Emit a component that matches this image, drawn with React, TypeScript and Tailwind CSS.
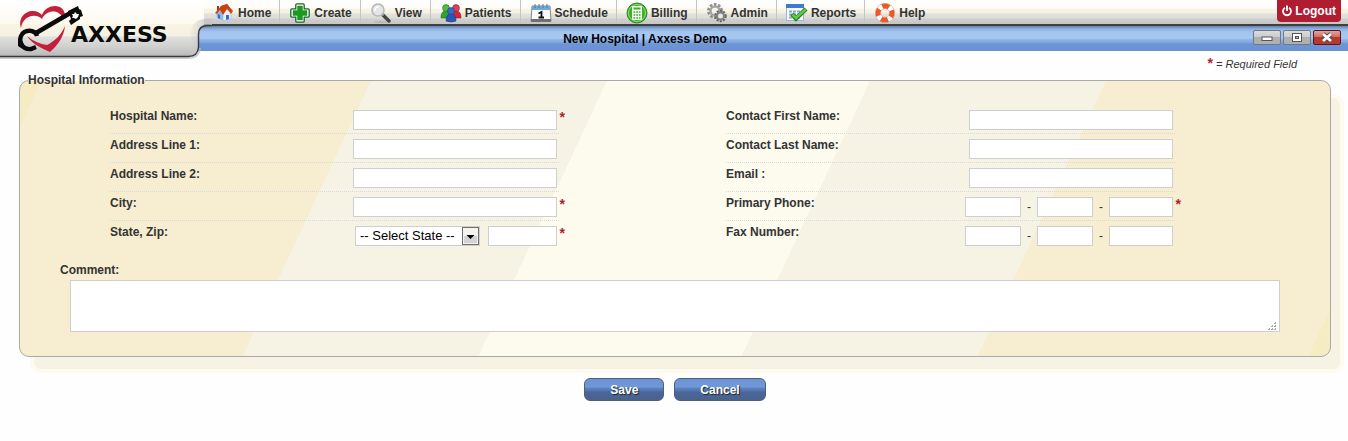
import type { ReactNode } from 'react';

const HomeIcon = () => (
  <svg width="20" height="20" viewBox="0 0 20 20">
    <path d="M2 9 L7 6 L10 11 L10 18 L3 15 Z" fill="#8fbbe9" />
    <path d="M9 18 L9 10 L13 6 L17 10 L17 16 Z" fill="#e9f0fa" stroke="#9fb8dc" strokeWidth=".6" />
    <path d="M4 11 L6 12 V16 L4 15 Z M12 12 H15 V16 L12 17 Z" fill="#2d6fc4" />
    <path d="M1 10 L7 3 L13 1 L19 8 L17 11 L13 6 L9 12 L6 7 L3 11 Z" fill="#cf4a18" />
    <path d="M7 3 L13 1 L18 8 L13 5 L9 11 L6 6 Z" fill="#c7420f" />
    <path d="M3 3 H5 V6 L3 8 Z" fill="#a33512" />
  </svg>
);

const CreateIcon = () => (
  <svg width="20" height="20" viewBox="0 0 20 20">
    <path
      d="M7 .8 H13 Q14.200 .8 14.200 2 V5.800 H18 Q19.200 5.800 19.200 7 V13 Q19.200 14.200 18 14.200 H14.200 V18 Q14.200 19.200 13 19.200 H7 Q5.800 19.200 5.800 18 V14.200 H2 Q.8 14.200 .8 13 V7 Q.8 5.800 2 5.800 H5.800 V2 Q5.800 .8 7 .8 Z"
      fill="#fff"
      stroke="#1a6423"
      strokeWidth="1.300"
    />
    <path d="M7.500 3 H12.500 V7.500 H17 V12.500 H12.500 V17 H7.500 V12.500 H3 V7.500 H7.500 Z" fill="#1c9a20" stroke="#12801a" strokeWidth=".4" />
  </svg>
);

const ViewIcon = () => (
  <svg width="20" height="20" viewBox="0 0 20 20">
    <ellipse cx="10" cy="19" rx="7" ry="1" fill="#b9b9b5" />
    <path d="M12 12 L18 18" stroke="#444" strokeWidth="3.400" strokeLinecap="round" />
    <path d="M10.500 10.500 L12.500 12.500" stroke="#999" strokeWidth="2" />
    <circle cx="7" cy="7" r="6" fill="#e4e6e6" stroke="#b8b8b8" strokeWidth="1.600" />
    <path d="M4 8 Q3.500 4 8 3.500" fill="none" stroke="#fff" strokeWidth="1.500" />
  </svg>
);

const PatientsIcon = () => (
  <svg width="22" height="20" viewBox="0 0 22 20">
    <path d="M1 15 Q1 8 5.500 8 Q10 8 10 15 Z" fill="#2fa32f" stroke="#19701d" strokeWidth=".6" />
    <circle cx="6" cy="5" r="3.400" fill="#4fbf3e" stroke="#19701d" strokeWidth=".6" />
    <path d="M12 15 Q12 8 16.500 8 Q21 8 21 15 Z" fill="#d3253a" stroke="#941526" strokeWidth=".6" />
    <circle cx="16" cy="5" r="3.400" fill="#e0434f" stroke="#941526" strokeWidth=".6" />
    <path d="M6 18 Q6 11 11 11 Q16 11 16 18 Q11 20 6 18 Z" fill="#2c56b4" stroke="#1c3a80" strokeWidth=".6" />
    <circle cx="11" cy="8" r="3.500" fill="#3c6aca" stroke="#1c3a80" strokeWidth=".6" />
  </svg>
);

const ScheduleIcon = () => (
  <svg width="22" height="20" viewBox="0 0 22 20">
    <path d="M2 3 H20 L21 18 H1 Z" fill="#fafafa" stroke="#888" strokeWidth="1" />
    <path d="M2 3 H20 V7 H2 Z" fill="#6fa9dc" />
    <path d="M1 16 H21 V19 H1 Z" fill="#6f6f6f" />
    <path d="M5 1 V5 M9 1 V5 M13 1 V5 M17 1 V5" stroke="#5a7288" strokeWidth="1" />
    <path d="M8.500 10.500 L11.500 9 V14.500 M8.500 14.500 H14" fill="none" stroke="#111" strokeWidth="1.800" />
  </svg>
);

const BillingIcon = () => (
  <svg width="22" height="22" viewBox="0 0 22 22">
    <circle cx="11" cy="11" r="10" fill="#3fae2d" stroke="#2a8a1e" />
    <circle cx="11" cy="11" r="8.500" fill="none" stroke="#8ee07a" />
    <rect x="6" y="4" width="10" height="14" rx="1" fill="#f3fbef" />
    <path d="M7.500 6.500 H14.500" stroke="#3fae2d" strokeWidth="2" />
    <path d="M7.500 10 H14.500 M7.500 13 H14.500 M7.500 16 H14.500" stroke="#3fae2d" strokeWidth="1.500" strokeDasharray="1.700 1" />
  </svg>
);

const AdminIcon = () => (
  <svg width="20" height="20" viewBox="0 0 20 20">
    <circle cx="8" cy="8" r="6.500" fill="none" stroke="#909090" strokeWidth="3" strokeDasharray="2.600 1.500" />
    <circle cx="8" cy="8" r="4.500" fill="none" stroke="#a5a5a5" strokeWidth="2.500" />
    <circle cx="13.500" cy="13" r="5" fill="none" stroke="#666" strokeWidth="2.400" strokeDasharray="2 1.200" />
    <circle cx="13.500" cy="13" r="3.500" fill="#e6e6e2" stroke="#808080" strokeWidth="2" />
  </svg>
);

const ReportsIcon = () => (
  <svg width="22" height="20" viewBox="0 0 22 20">
    <rect x=".5" y="1.500" width="17" height="16" fill="#f6f9fd" stroke="#9fb4cd" />
    <rect x="0" y="1" width="18" height="4" fill="#3d7bd0" />
    <path d="M3 8.500 H15 M3 11.500 H15 M3 14.500 H15" stroke="#8aa5c8" strokeWidth="2" strokeDasharray="3 1" />
    <path d="M6 11 L10 15.500 L20 6" fill="none" stroke="#237d1b" strokeWidth="4.400" />
    <path d="M6.500 11.500 L10 15 L19.500 6.500" fill="none" stroke="#5fcc47" strokeWidth="2.600" />
  </svg>
);

const HelpIcon = () => (
  <svg width="20" height="20" viewBox="0 0 20 20">
    <circle cx="10" cy="10" r="7" fill="none" stroke="#b9a59c" strokeWidth="6" />
    <circle cx="10" cy="10" r="7" fill="none" stroke="#fdfdfd" strokeWidth="5" />
    <circle cx="10" cy="10" r="7" fill="none" stroke="#ea5a28" strokeWidth="5" strokeDasharray="7 4" strokeDashoffset="3" />
  </svg>
);

const menu: { label: string; icon: ReactNode }[] = [
  { label: 'Home', icon: <HomeIcon /> },
  { label: 'Create', icon: <CreateIcon /> },
  { label: 'View', icon: <ViewIcon /> },
  { label: 'Patients', icon: <PatientsIcon /> },
  { label: 'Schedule', icon: <ScheduleIcon /> },
  { label: 'Billing', icon: <BillingIcon /> },
  { label: 'Admin', icon: <AdminIcon /> },
  { label: 'Reports', icon: <ReportsIcon /> },
  { label: 'Help', icon: <HelpIcon /> },
];

function Logo() {
  return (
    <a href="#" aria-label="Axxess" className="absolute left-0 top-0 z-10">
      <svg width="212" height="62" viewBox="0 0 212 62">
        <defs>
          <linearGradient id="tab" x1="0" y1="0" x2="0" y2="1">
            <stop offset="0" stopColor="#fff" />
            <stop offset=".2" stopColor="#fefdfa" />
            <stop offset=".42" stopColor="#fcf9ee" />
            <stop offset=".43" stopColor="#f9f4e3" />
            <stop offset=".64" stopColor="#f4f1e4" />
            <stop offset=".66" stopColor="#e0e0de" />
            <stop offset=".84" stopColor="#cfcfce" />
            <stop offset="1" stopColor="#b9b9b9" />
          </linearGradient>
          <linearGradient id="edge" x1="0" y1="0" x2="1" y2="0">
            <stop offset="0" stopColor="#c6c6c4" stopOpacity="0" />
            <stop offset="1" stopColor="#c6c6c4" />
          </linearGradient>
        </defs>
        <path d="M0 58 H189 Q199 58 200 48" fill="none" stroke="#bbb" strokeWidth="2" opacity=".7" />
        <path d="M0 0 H204 V25.500 Q198.500 26 198.500 34 V47 Q198 56 188 56 H0 Z" fill="url(#tab)" />
        <path d="M212 19 V25.500 H207 Q198.500 26 198.500 34 V47 Q198 56 188 56 Q196 48 190 34 Q192 20 204 19 Z" fill="url(#edge)" />
        <path d="M212 25.500 H207 Q198.500 26 198.500 34 V47 Q198 56.500 188 56.500 H0" fill="none" stroke="#3a3a3a" strokeWidth="1.400" />
        <path
          d="M21 28 C18 19 24 11 33 11 C37 11 40 13 42 15 C44 9 50 6 55 6 C61 6 65 10 65 16 L62 17 C59 10 47 9 42 19 C36 13 23 15 21 28 Z"
          fill="#c3203b"
        />
        <path d="M27 36 C33 41 40 44 47 45 C55 41 61 35 65 26 C64 37 57 46 50 52 C41 48 32 44 27 36 Z" fill="#c3203b" />
        <path d="M36 33 L72 12" stroke="#0b0b0b" strokeWidth="4.600" />
        <path d="M68 11 L78 6 L79 9 L81 10 L83 16 L80 17 L80 19 L71 25 L69 21 L71 19 Z" fill="#0b0b0b" />
        <path d="M72 14 L74 14 L75 12 L77 14 L79 14 L78 17 L76 19 L74 18 L72 18 L73 16 Z" fill="#fff" />
        <path d="M37 36 C35 29 24 29 21 36 C18 44 24 50 31 49 L36 47" fill="none" stroke="#0b0b0b" strokeWidth="4.400" />
        <path d="M18 39 L18 46 L21 48 L26 49 L22 40 Z" fill="#0b0b0b" />
        <text x="71" y="42" fontFamily="DejaVu Sans, sans-serif" fontWeight="bold" fontSize="22" fill="#0b0b0b">
          AXXESS
        </text>
      </svg>
    </a>
  );
}

function WindowButton({ label, close, children }: { label: string; close?: boolean; children: ReactNode }) {
  const tone = close
    ? 'border-[#5e1420] bg-linear-to-b from-[#e0a59c] via-[#cf6f62] via-45% to-[#b63a2c] to-50%'
    : 'border-[#6d7888] bg-linear-to-b from-[#dcdcdc] via-[#cccccc] via-45% to-[#b0b0b0] to-50%';
  return (
    <button
      type="button"
      aria-label={label}
      className={`flex h-[15px] w-7 items-center justify-center rounded-[2px] border ${tone}`}
    >
      <svg width="14" height="11" viewBox="0 0 14 11">
        {children}
      </svg>
    </button>
  );
}

const inputClass = 'h-5 border border-[#cfcfcf] bg-white px-1 text-xs outline-none';

function Row({ id, label, required, children }: { id: string; label: string; required?: boolean; children: ReactNode }) {
  return (
    <div className="relative flex items-start justify-between border-b border-dotted border-[#d9d9dd] pb-[3px] pr-0.5 pt-[5px] last:border-b-0">
      <label htmlFor={id} className="font-bold leading-3">
        {label}
      </label>
      <div className="flex items-center">{children}</div>
      {required && <span className="absolute -right-1.5 top-1 text-sm font-bold leading-4 text-[#b01c30]">*</span>}
    </div>
  );
}

function PhoneInputs({ id, label }: { id: string; label: string }) {
  return (
    <>
      <input id={id} type="text" className={`${inputClass} w-14`} />
      <span className="w-4 text-center">-</span>
      <input type="text" aria-label={`${label} prefix`} className={`${inputClass} w-14`} />
      <span className="w-4 text-center">-</span>
      <input type="text" aria-label={`${label} line`} className={`${inputClass} w-16`} />
    </>
  );
}

function TextRow({ id, label, required }: { id: string; label: string; required?: boolean }) {
  return (
    <Row id={id} label={label} required={required}>
      <input id={id} type="text" className={`${inputClass} w-[204px]`} />
    </Row>
  );
}

export default function App() {
  return (
    <div className="min-h-screen bg-[#fefefe] font-['Liberation_Sans',Arial,sans-serif] text-xs text-[#333]">
      <header className="relative">
        <Logo />
        <div className="flex h-[26px] items-start justify-between border-b-2 border-[#3c4046] bg-[linear-gradient(to_bottom,#fff,#fdfcf8_8px,#f9f5e6_9px,#f5f1e1_13px,#e1e1dd_14px,#dcdcd9_18px,#cfcfcd_19px,#c6c6c4)] pl-[204px] pr-[7px]">
          <nav className="relative z-20 flex h-6">
            {menu.map((item) => (
              <a
                key={item.label}
                href="#"
                className="flex h-full items-center gap-1 border-r border-[#c4c4c0] pl-2.5 pr-2 pt-px font-bold last:border-r-0"
              >
                <span className="flex w-5 items-center justify-center [&>svg]:shrink-0">{item.icon}</span>
                {item.label}
              </a>
            ))}
          </nav>
          <a
            href="#"
            className="relative flex h-[22px] items-center gap-[3px] rounded-b bg-[#b01c30] px-[5px] font-bold text-white"
          >
            <svg width="10" height="12" viewBox="0 0 10 12" fill="none" stroke="#fff" strokeWidth="1.800">
              <path d="M3 2.800 A4 4 0 1 0 7 2.800 M5 .5 V6" />
            </svg>
            Logout
          </a>
        </div>
        <div className="relative flex h-[25px] items-center justify-center bg-[linear-gradient(to_bottom,#66809f,#8fb2e2_3px,#a2c4ef_6px,#a8c9f2_12px,#8fb1e6_14px,#86a9e0_16px,#6d95d6_18px,#6b92d2)] pr-[58px]">
          <h1 className="font-bold text-black">New Hospital | Axxess Demo</h1>
          <div className="absolute right-[7px] top-1 flex gap-0.5">
            <WindowButton label="Minimize">
              <rect x="2" y="5" width="10" height="3.500" fill="#fff" stroke="#555" />
            </WindowButton>
            <WindowButton label="Maximize">
              <rect x="2.500" y="1.500" width="9" height="8" fill="#fff" stroke="#555" />
              <rect x="5.500" y="4.500" width="3" height="2" fill="#bbb" stroke="#555" />
            </WindowButton>
            <WindowButton label="Close" close>
              <path d="M3 2 L11 9 M11 2 L3 9" stroke="#5a4a4a" strokeWidth="4.600" />
              <path d="M3 2 L11 9 M11 2 L3 9" stroke="#fff" strokeWidth="2.800" />
            </WindowButton>
          </div>
        </div>
      </header>

      <main className="pl-[19px] pr-[17px] pt-[5px]">
        <p className="pr-[34px] text-right text-[11px] italic leading-[14px]">
          <span className="text-sm font-bold not-italic leading-[14px] text-[#b01c30]">*</span> = Required Field
        </p>

        <form>
          <fieldset className="mt-0.5 rounded-[10px] border border-[#a9a9a9] bg-[linear-gradient(115deg,#f5ecc4_1.5%,#f7edd0_1.5%_24.4%,#f7f3e4_24.4%_40.8%,#fdfaee_40.8%_59.1%,#f7f3e4_59.1%_75.5%,#f7edd0_75.5%_98.5%,#f5ecc4_98.5%)] px-2 pb-6 shadow-[12px_15px_0_-3px_#f7f3e4,12px_15px_0_1px_#fdfaee]">
            <legend className="font-bold leading-[14px]">Hospital Information</legend>
            <div className="px-8 pt-[18px]">
              <div className="grid grid-cols-2">
                <div className="pl-[50px] pr-[116px]">
                  <TextRow id="name" label="Hospital Name:" required />
                  <TextRow id="address1" label="Address Line 1:" />
                  <TextRow id="address2" label="Address Line 2:" />
                  <TextRow id="city" label="City:" required />
                  <Row id="state" label="State, Zip:" required>
                    <div className="relative mr-2">
                      <select
                        id="state"
                        className="block h-5 w-[125px] appearance-none border border-[#cfcfcf] bg-white pl-1 text-[13px] leading-4 text-black outline-none"
                      >
                        <option>-- Select State --</option>
                      </select>
                      <svg className="pointer-events-none absolute right-px top-px" width="17" height="18" viewBox="0 0 17 18">
                        <rect x=".5" y=".5" width="16" height="17" fill="#f4f4ee" stroke="#6f6f6f" />
                        <rect x="2" y="9" width="13" height="7" fill="#d3d3d3" />
                        <path d="M4.500 8 H12.500 L8.500 12 Z" fill="#000" />
                      </svg>
                    </div>
                    <input type="text" aria-label="Zip" className={`${inputClass} w-[69px]`} />
                  </Row>
                </div>
                <div className="pl-[51px] pr-[115px]">
                  <TextRow id="first-name" label="Contact First Name:" />
                  <TextRow id="last-name" label="Contact Last Name:" />
                  <TextRow id="email" label="Email :" />
                  <Row id="phone" label="Primary Phone:" required>
                    <PhoneInputs id="phone" label="Primary Phone" />
                  </Row>
                  <Row id="fax" label="Fax Number:">
                    <PhoneInputs id="fax" label="Fax Number" />
                  </Row>
                </div>
              </div>
              <label htmlFor="comment" className="mt-3.5 block font-bold leading-[14px]">
                Comment:
              </label>
              <div className="relative mx-2.5 mt-[3px]">
                <textarea id="comment" className="block h-[52px] w-full resize-none border border-[#cfcfcf] bg-white p-1 outline-none" />
                <svg className="pointer-events-none absolute bottom-0.5 right-[3px]" width="9" height="9" viewBox="0 0 9 9" fill="#aaa">
                  <path d="M7 1h1v2h-2v-1h1z M4 4h1v2h-2v-1h1z M7 4h1v2h-2v-1h1z M1 7h1v2h-2v-1h1z M4 7h1v2h-2v-1h1z M7 7h1v2h-2v-1h1z" />
                </svg>
              </div>
            </div>
          </fieldset>

          <div className="mt-[21px] flex justify-center gap-2.5">
            {['Save', 'Cancel'].map((label) => (
              <button
                key={label}
                type="button"
                className="h-[23px] rounded-md border border-[#4f5f78] bg-[linear-gradient(to_bottom,#6c94d6,#7199d8_8px,#5f85c2_9px,#4f73ac_12px,#4a679a_13px,#4a628c)] px-[25px] font-bold text-white text-shadow-[1px_1px_1px_#222]"
              >
                {label}
              </button>
            ))}
          </div>
        </form>
      </main>
    </div>
  );
}
